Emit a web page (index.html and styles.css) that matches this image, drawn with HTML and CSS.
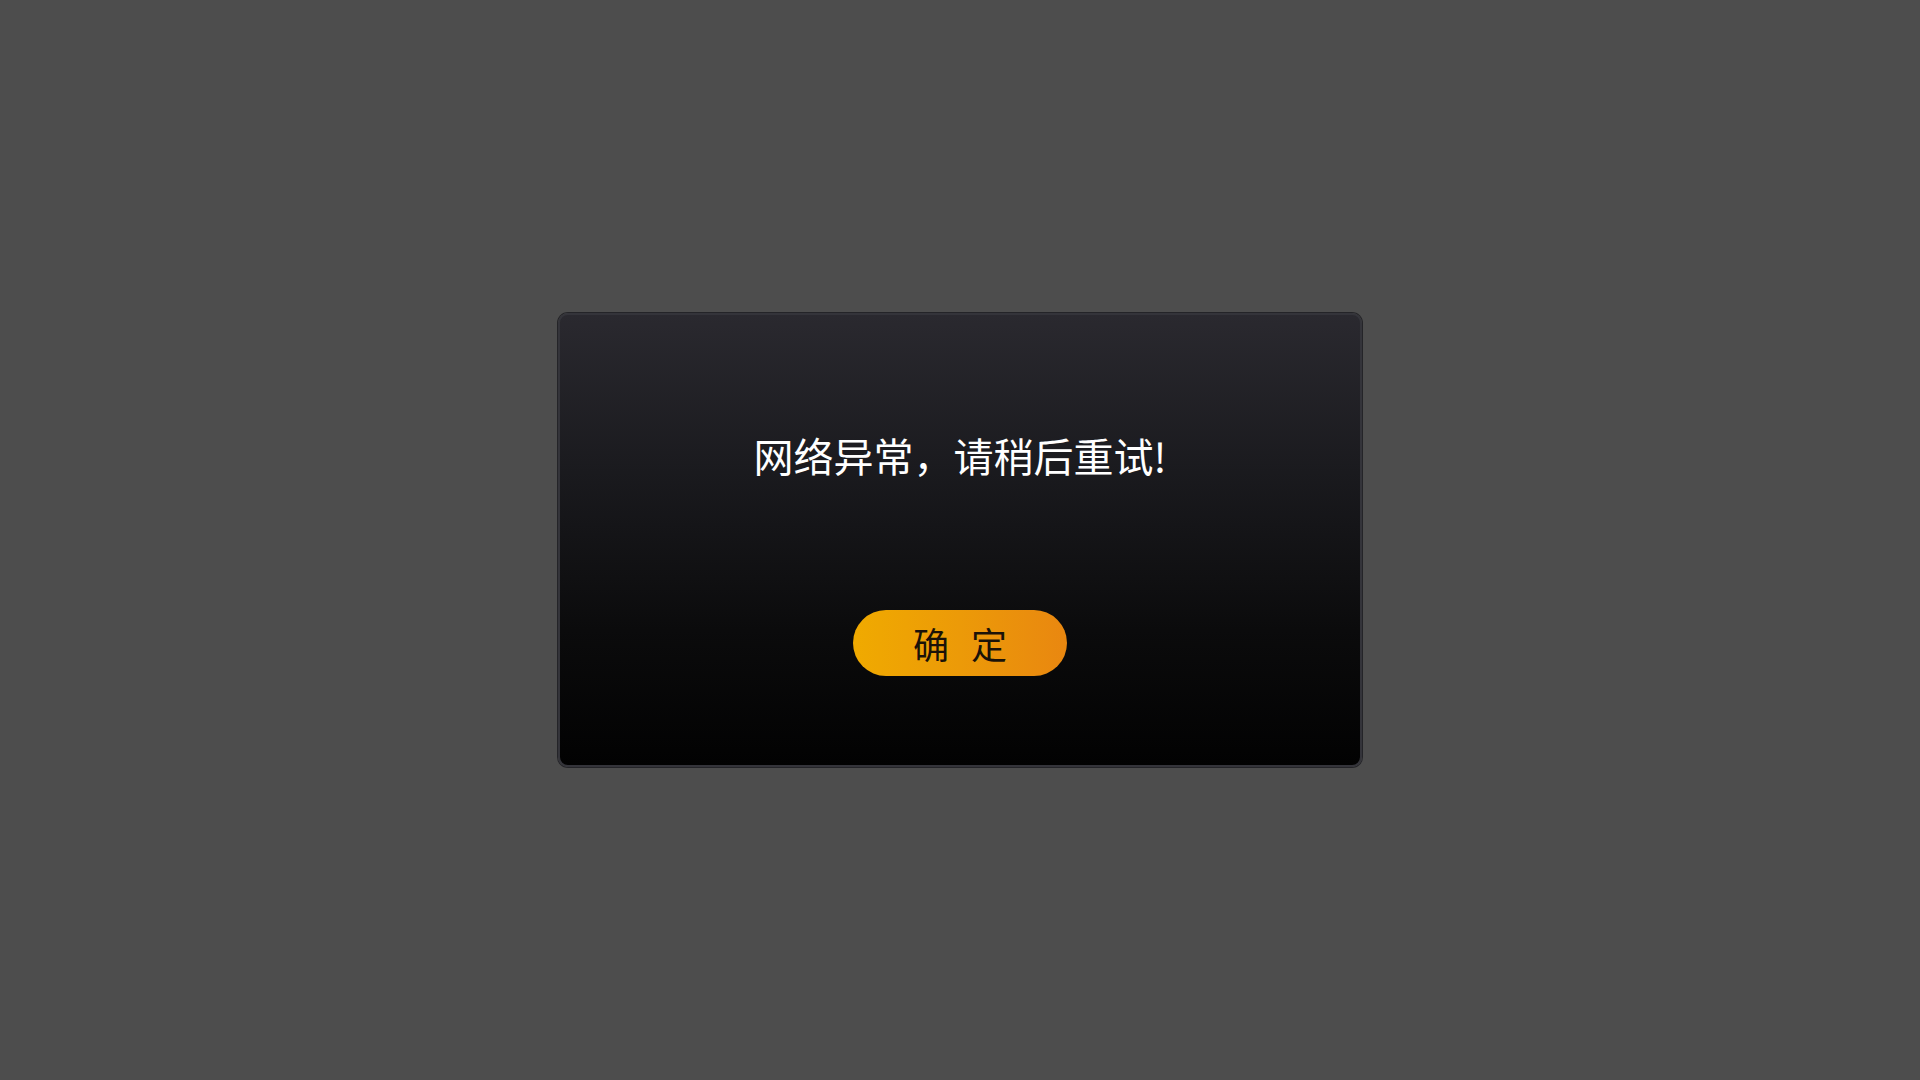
FILE: index.html
```html
<!DOCTYPE html>
<html lang="zh-CN">
<head>
<meta charset="utf-8">
<title>网络异常</title>
<link rel="stylesheet" href="styles.css">
</head>
<body>
<div class="overlay">
  <div class="dialog">
    <p class="message">网络异常，请稍后重试!</p>
    <button class="confirm" type="button">确定</button>
  </div>
</div>
</body>
</html>
```

FILE: styles.css
```css
html, body {
  margin: 0;
  padding: 0;
  width: 100%;
  height: 100%;
}

body {
  background: #4d4d4d;
  font-family: "Noto Sans CJK SC", "Noto Sans", sans-serif;
}

.overlay {
  width: 1920px;
  height: 1080px;
  display: flex;
  align-items: center;
  justify-content: center;
}

.dialog {
  box-sizing: border-box;
  width: 804px;
  height: 454px;
  border: 2px solid #34343a;
  border-radius: 10px;
  box-shadow: 0 0 0 1px #242428;
  background: linear-gradient(to bottom, #2a292f 0%, #1a1a1e 35%, #0b0b0c 70%, #020202 100%);
  display: flex;
  flex-direction: column;
  align-items: center;
  padding-top: 112px;
}

.message {
  margin: 0;
  color: #ffffff;
  font-size: 40px;
  line-height: 56px;
  font-weight: 400;
  white-space: nowrap;
}

.confirm {
  margin-top: 127px;
  width: 214px;
  height: 66px;
  border: none;
  border-radius: 33px;
  background: linear-gradient(to right, #f0aa00 0%, #ec9a08 50%, #e98710 100%);
  color: #1a1208;
  font-family: "Noto Sans CJK SC", "Noto Sans", sans-serif;
  font-size: 36px;
  line-height: 66px;
  padding: 0 0 0 22px;
  letter-spacing: 22px;
  cursor: pointer;
}
```
